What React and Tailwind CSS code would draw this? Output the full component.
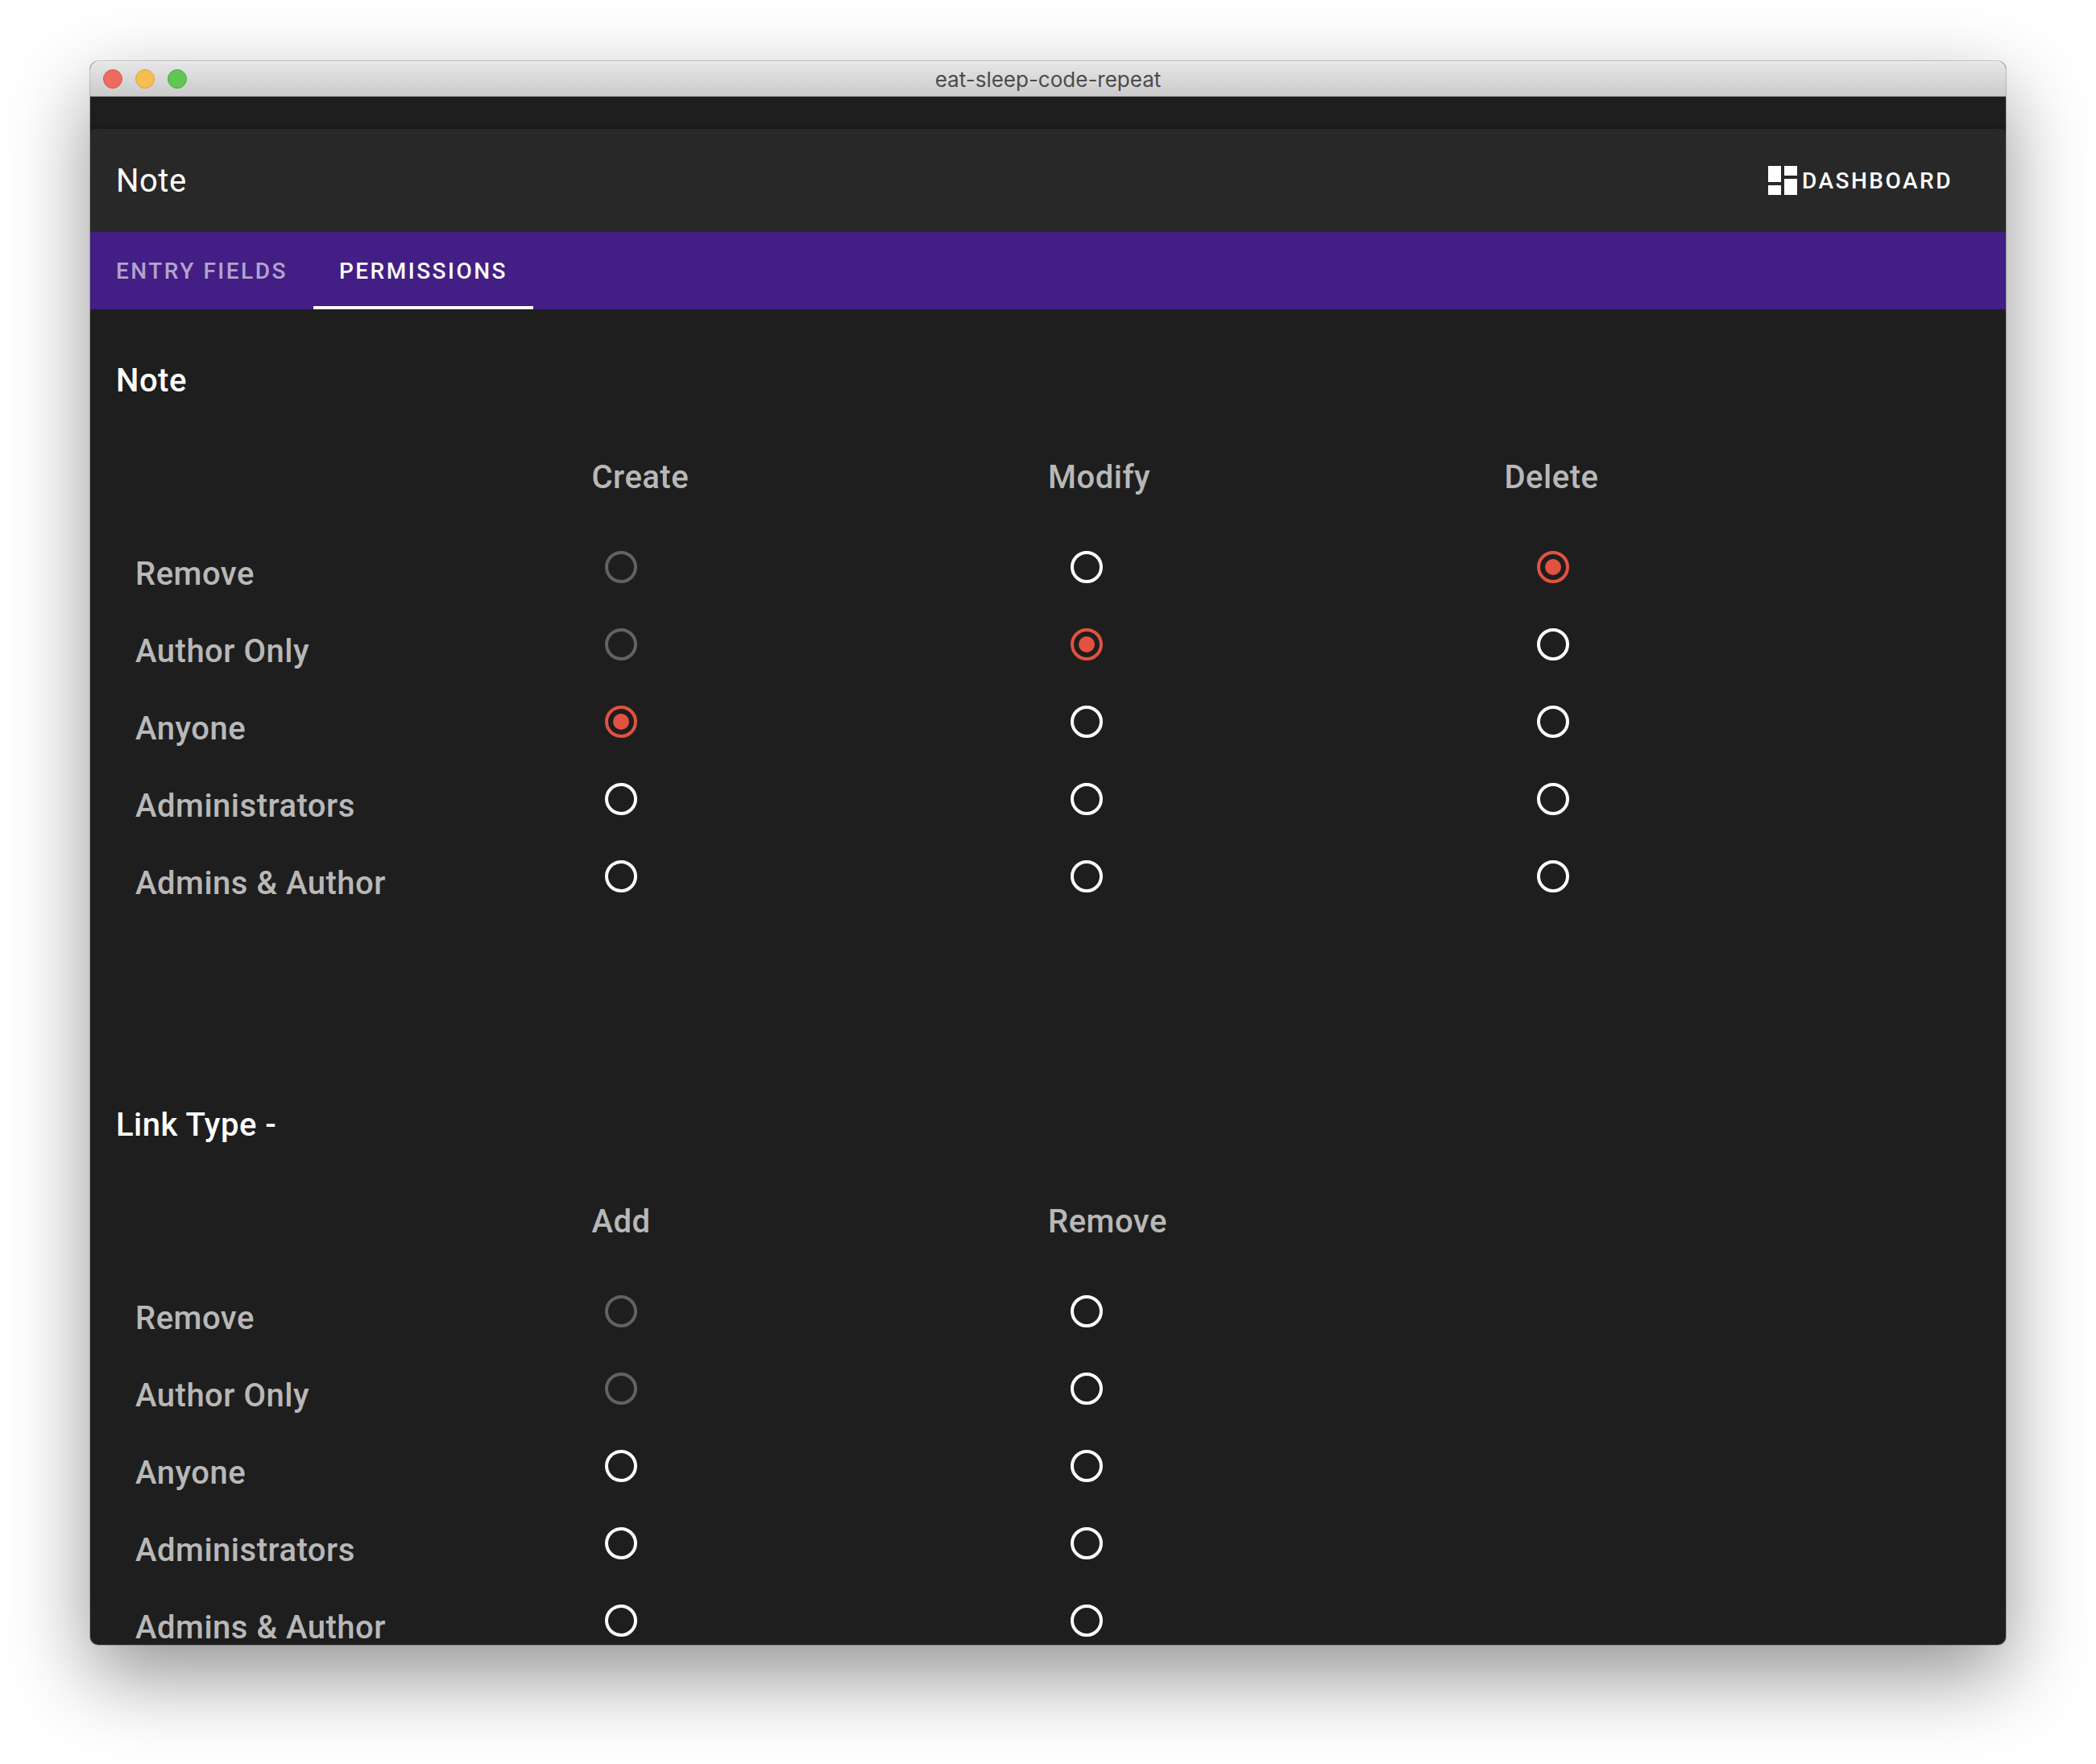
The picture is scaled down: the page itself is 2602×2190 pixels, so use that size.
import React, { useState } from "react";
import { MdDashboard } from "react-icons/md";

const ROLES = ["Remove", "Author Only", "Anyone", "Administrators", "Admins & Author"];

const SECTIONS = [
  {
    id: "note",
    title: "Note",
    columns: [
      { name: "Create", selected: 2, disabled: [0, 1] },
      { name: "Modify", selected: 1, disabled: [] },
      { name: "Delete", selected: 0, disabled: [] },
    ],
  },
  {
    id: "link",
    title: "Link Type -",
    columns: [
      { name: "Add", selected: null, disabled: [0, 1] },
      { name: "Remove", selected: null, disabled: [] },
    ],
  },
];

const TABS = ["Entry Fields", "Permissions"];

function TitleBar() {
  return (
    <div className="grid h-11 shrink-0 grid-cols-[1fr_auto_1fr] items-center border-b border-[#a9a9a9] bg-linear-to-b from-[#e7e7e7] to-[#cbcbcb] px-4 shadow-[inset_0_1px_0_#f6f6f6]">
      <div className="flex gap-4">
        <button type="button" aria-label="Close" className="size-6 rounded-full border border-[#d9564d] bg-[#ed6b5f]" />
        <button type="button" aria-label="Minimize" className="size-6 rounded-full border border-[#dba13c] bg-[#f6be50]" />
        <button type="button" aria-label="Zoom" className="size-6 rounded-full border border-[#4fa73f] bg-[#62c655]" />
      </div>
      <span className="pt-0.5 font-[Inter,sans-serif] text-[26px] leading-8 text-[#4b4b4b]">eat-sleep-code-repeat</span>
    </div>
  );
}

function Tabs({ active, onSelect }) {
  return (
    <div role="tablist" className="flex h-24 shrink-0 bg-[#431e85]">
      {TABS.map((tab, i) => (
        <button
          key={tab}
          type="button"
          role="tab"
          aria-selected={i === active}
          onClick={() => onSelect(i)}
          className={
            "border-y-4 border-t-transparent px-8 pt-0.5 text-[28px] font-medium tracking-[0.0892857em] uppercase " +
            (i === active ? "border-b-white text-white" : "border-b-transparent text-white/60")
          }
        >
          {tab}
        </button>
      ))}
    </div>
  );
}

function PermissionSection({ section }) {
  const [selected, setSelected] = useState(section.columns.map((c) => c.selected));

  return (
    <section className="px-8 pt-14 pb-[172px] leading-[66px]">
      <h2 className="text-white">{section.title}</h2>
      <table className="mt-[30px] block">
        <thead className="block">
          <tr className="grid h-30 grid-cols-4 px-6 pt-6">
            <td />
            {section.columns.map((c) => (
              <th key={c.name} scope="col" id={section.id + "-" + c.name} className="text-left font-medium">
                {c.name}
              </th>
            ))}
          </tr>
        </thead>
        <tbody className="block">
          {ROLES.map((role, r) => (
            <tr key={role} className="grid h-24 grid-cols-4">
              <th scope="row" id={section.id + "-row-" + r} className="pt-6 pl-6 text-left font-medium">
                {role}
              </th>
              {section.columns.map((c, i) => (
                <td key={c.name} className="flex items-center pl-7">
                  <input
                    type="radio"
                    name={section.id + "-" + c.name}
                    aria-labelledby={section.id + "-row-" + r + " " + section.id + "-" + c.name}
                    checked={selected[i] === r}
                    disabled={c.disabled.includes(r)}
                    onChange={() => setSelected(selected.map((v, n) => (n === i ? r : v)))}
                    className="grid size-10 appearance-none place-items-center rounded-full border-4 border-white before:size-5 before:rounded-full checked:border-[#e25241] checked:before:bg-[#e25241] disabled:border-[#626262]"
                  />
                </td>
              ))}
            </tr>
          ))}
        </tbody>
      </table>
    </section>
  );
}

export default function App() {
  const [tab, setTab] = useState(1);

  return (
    <div className="h-screen overflow-hidden bg-white px-28 pt-[76px] pb-37 font-[Roboto,sans-serif]">
      <div className="flex h-full flex-col overflow-hidden rounded-[10px] bg-[#1e1e1e] shadow-[0_0_0_1px_rgba(0,0,0,0.22),0_38px_100px_rgba(0,0,0,0.43)]">
        <TitleBar />
        <header className="mt-10 flex h-32 shrink-0 items-center justify-between rounded-t-md bg-[#282828] pr-[66px] pl-8 text-white shadow-[0_0_8px_rgba(0,0,0,0.3)]">
          <h1 className="text-[40px] leading-[66px] tracking-[0.0125em] pt-0.5">Note</h1>
          <button type="button" className="flex items-center text-[28px] font-medium tracking-[0.0892857em] uppercase">
            <MdDashboard className="size-12" aria-hidden="true" />
            <span className="pt-0.5">Dashboard</span>
          </button>
        </header>
        <Tabs active={tab} onSelect={setTab} />
        <main className="min-h-0 flex-1 overflow-hidden text-[40px] font-medium tracking-[0.0125em] text-white/70">
          {SECTIONS.map((s) => (
            <PermissionSection key={s.id} section={s} />
          ))}
        </main>
      </div>
    </div>
  );
}
